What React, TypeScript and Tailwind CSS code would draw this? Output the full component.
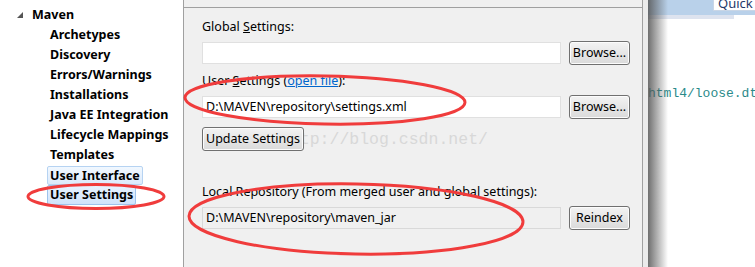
const treeItems = [
  'Archetypes',
  'Discovery',
  'Errors/Warnings',
  'Installations',
  'Java EE Integration',
  'Lifecycle Mappings',
  'Templates',
];

const ui = { fontFamily: '"Noto Sans", "Liberation Sans", sans-serif' };

const Btn = ({ children, className = '' }: { children: React.ReactNode; className?: string }) => (
  <button
    className={`relative z-10 h-6 rounded-[3px] border border-[#707070] bg-gradient-to-b from-[#f3f3f3] to-[#dadada] text-[12.5px] text-black shadow-[inset_0_0_0_1px_#fcfcfc] ${className}`}
  >
    {children}
  </button>
);

const Field = ({ value = '', readOnly = false }: { value?: string; readOnly?: boolean }) => (
  <div
    className={`flex h-[22px] w-[359px] items-center border px-[3px] text-[12.5px] text-black ${
      readOnly ? 'border-[#d9d9d9] bg-[#f0f0f0]' : 'border-[#e0e0e0] bg-white'
    }`}
  >
    {value}
  </div>
);

const App = () => (
  <div className="relative flex h-[267px] w-[755px] overflow-hidden bg-white" style={ui}>
    {/* preference tree */}
    <div className="w-[183px] shrink-0 bg-white pt-[5px] text-[12.5px] font-bold text-black">
      <div className="flex h-5 items-center pl-[17px]">
        <svg width="6" height="6" viewBox="0 0 6 6" className="mr-[9px]">
          <polygon points="6,0 6,6 0,6" fill="#555" />
        </svg>
        Maven
      </div>
      {treeItems.map(item => (
        <div className="flex h-5 items-center pl-[50px]" key={item}>
          {item}
        </div>
      ))}
      <div className="flex h-5 items-center pl-[47px]">
        <span className="rounded-[2px] border border-[#b6d3f2] bg-gradient-to-b from-[#f1f8ff] to-[#dceafb] px-[2px] leading-[17px]">
          User Interface
        </span>
      </div>
      <div className="flex h-5 items-center pl-[47px]">
        <span className="rounded-[2px] border border-[#9ec3ec] bg-gradient-to-b from-[#e8f3ff] to-[#cfe3fb] px-[2px] leading-[18px]">
          User Settings
        </span>
      </div>
    </div>

    {/* settings page */}
    <div className="flex w-[460px] shrink-0 flex-col border-x border-[#a0a0a0] bg-[#f0f0f0]">
      <div className="h-2 shrink-0 border-b border-[#a0a0a0]" />
      <div className="flex flex-col pl-[18px] pr-[10px] text-[12.5px] text-black">
        <div className="mt-[11px] leading-4">
          Global <span className="underline">S</span>ettings:
        </div>
        <div className="mt-[6px] flex items-center gap-2">
          <Field />
          <Btn className="w-[61px]">Browse...</Btn>
        </div>
        <div className="mt-2 leading-4">
          User <span className="underline">S</span>ettings (
          <span className="text-[#0066cc] underline">open file</span>):
        </div>
        <div className="mt-[6px] flex items-center gap-2">
          <Field value="D:\MAVEN\repository\settings.xml" />
          <Btn className="w-[61px]">Browse...</Btn>
        </div>
        <div className="relative mt-2 flex">
          <Btn className="w-[102px]">Update Settings</Btn>
          <span
            className="absolute left-[78px] top-[1px] z-0 text-[16.5px] text-[#d8d8d8]"
            style={{ fontFamily: '"Liberation Mono", monospace' }}
          >
            http://blog.csdn.net/
          </span>
        </div>
        <div className="mt-[33px] leading-4">Local Repository (From merged user and global settings):</div>
        <div className="mt-[6px] flex items-center gap-2">
          <Field value="D:\MAVEN\repository\maven_jar" readOnly />
          <Btn className="w-[61px]">Reindex</Btn>
        </div>
      </div>
    </div>

    {/* editor behind the dialog */}
    <div className="relative flex-1 bg-white">
      <div className="flex h-[15px] bg-[#b9d1ea] pl-[70px]">
        <div className="h-[11px] flex-1 overflow-hidden border border-t-0 border-[#c9d6e6] bg-white pl-[4px]">
          <div className="-mt-[3px] text-[13px] leading-[13px] text-[#1f3a6a]">Quick Access</div>
        </div>
      </div>
      <div className="mr-[47px] h-[4px] bg-[#dde3ef]" />
      <div
        className="mt-[65px] whitespace-nowrap pl-[5px] text-[13px] text-[#2a8a8a]"
        style={{ fontFamily: '"Liberation Mono", monospace' }}
      >
        html4/loose.dtd"&gt;
      </div>
      <div className="absolute inset-y-0 left-0 w-[5px] bg-[#ebebeb]" />
      <div className="absolute inset-y-0 left-[5px] w-[20px] bg-gradient-to-r from-[#555]/85 to-transparent" />
    </div>

    {/* red annotations */}
    <svg className="pointer-events-none absolute inset-0 z-20" width="755" height="267">
      <g fill="none" stroke="#f03c3c" strokeWidth="3">
        <ellipse cx="96" cy="196.5" rx="68" ry="12" />
        <ellipse cx="325" cy="100" rx="140" ry="24" transform="rotate(1 325 100)" />
        <ellipse cx="356" cy="219" rx="167" ry="35" transform="rotate(1 356 219)" />
      </g>
    </svg>
  </div>
);

export default App;
